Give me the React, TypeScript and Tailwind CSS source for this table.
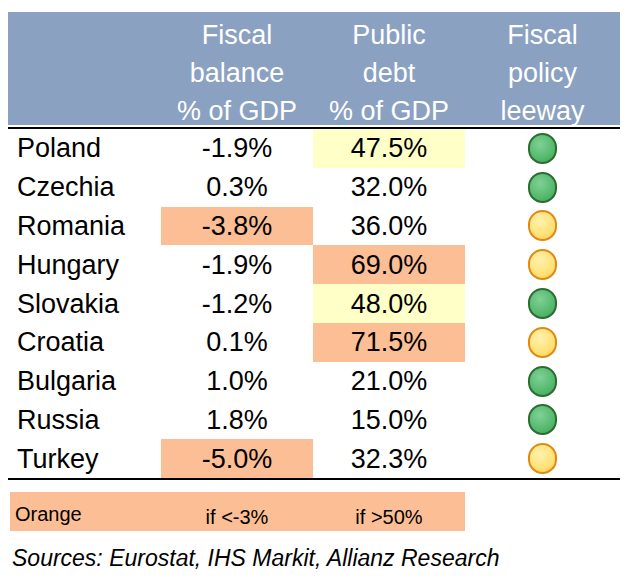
import React from "react"

type Light = "green" | "amber"
type Tone = "none" | "orange" | "yellow"

type Row = {
  country: string
  balance: string
  balanceTone: Tone
  debt: string
  debtTone: Tone
  leeway: Light
}

const rows: Row[] = [
  { country: "Poland", balance: "-1.9%", balanceTone: "none", debt: "47.5%", debtTone: "yellow", leeway: "green" },
  { country: "Czechia", balance: "0.3%", balanceTone: "none", debt: "32.0%", debtTone: "none", leeway: "green" },
  { country: "Romania", balance: "-3.8%", balanceTone: "orange", debt: "36.0%", debtTone: "none", leeway: "amber" },
  { country: "Hungary", balance: "-1.9%", balanceTone: "none", debt: "69.0%", debtTone: "orange", leeway: "amber" },
  { country: "Slovakia", balance: "-1.2%", balanceTone: "none", debt: "48.0%", debtTone: "yellow", leeway: "green" },
  { country: "Croatia", balance: "0.1%", balanceTone: "none", debt: "71.5%", debtTone: "orange", leeway: "amber" },
  { country: "Bulgaria", balance: "1.0%", balanceTone: "none", debt: "21.0%", debtTone: "none", leeway: "green" },
  { country: "Russia", balance: "1.8%", balanceTone: "none", debt: "15.0%", debtTone: "none", leeway: "green" },
  { country: "Turkey", balance: "-5.0%", balanceTone: "orange", debt: "32.3%", debtTone: "none", leeway: "amber" },
]

const toneClass: Record<Tone, string> = {
  none: "",
  orange: "bg-[#fcbe94]",
  yellow: "bg-[#ffffc8]",
}

function Dot({ light }: { light: Light }) {
  if (light === "green") {
    return (
      <div className="h-[31px] w-[29px] rounded-full border-2 border-[#2b6e2f] bg-[radial-gradient(circle_at_40%_35%,#7fd196_0%,#55b96e_60%,#3f9f57_100%)]" />
    )
  }
  return (
    <div className="h-[31px] w-[29px] rounded-full border-2 border-[#e08a14] bg-[radial-gradient(circle_at_40%_35%,#fff2b0_0%,#ffe37a_55%,#fbcf4f_100%)]" />
  )
}

export default function App() {
  return (
    <div className="min-h-[579px] w-[630px] bg-white pt-[12px] font-['Liberation_Sans',Arial,sans-serif] text-black">
      <div className="ml-[8px] w-[612px]">
        {/* header band */}
        <div className="grid h-[113px] grid-cols-[153px_152px_152px_155px] items-start bg-[#8ba1c2] pt-[4px] text-[27px] leading-[38px] text-white">
          <div />
          <div className="text-center">
            Fiscal
            <br />
            balance
            <br />% of GDP
          </div>
          <div className="text-center">
            Public
            <br />
            debt
            <br />% of GDP
          </div>
          <div className="text-center">
            Fiscal
            <br />
            policy
            <br />
            leeway
          </div>
        </div>

        <div className="mt-[2px] border-y-2 border-black">
          {rows.map((row) => (
            <div
              key={row.country}
              className="grid h-[38.8px] grid-cols-[153px_152px_152px_155px] text-[27px] leading-none"
            >
              <div className="flex items-center pl-[9px] pt-[1px]">{row.country}</div>
              <div className={`flex items-center justify-center pt-[1px] ${toneClass[row.balanceTone]}`}>{row.balance}</div>
              <div className={`flex items-center justify-center pt-[1px] ${toneClass[row.debtTone]}`}>{row.debt}</div>
              <div className="flex items-center justify-center">
                <Dot light={row.leeway} />
              </div>
            </div>
          ))}
        </div>
      </div>

      {/* legend */}
      <div className="ml-[10px] mt-[12px] grid h-[39px] w-[455px] grid-cols-[151px_152px_152px] bg-[#fcbe94] text-[20px] leading-none">
        <div className="flex items-center pl-[5px] pt-[4px]">Orange</div>
        <div className="flex items-center justify-center pt-[10px]">if &lt;-3%</div>
        <div className="flex items-center justify-center pt-[10px]">if &gt;50%</div>
      </div>

      <p className="ml-[12px] mt-[16px] text-[23px] italic leading-none">
        Sources: Eurostat, IHS Markit, Allianz Research
      </p>
    </div>
  )
}
